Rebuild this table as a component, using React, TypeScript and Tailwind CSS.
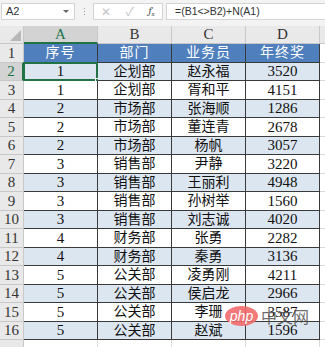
import React from 'react'

const rows: [string, string, string, string][] = [
  ['1', '企划部', '赵永福', '3520'],
  ['1', '企划部', '胥和平', '4151'],
  ['2', '市场部', '张海顺', '1286'],
  ['2', '市场部', '董连青', '2678'],
  ['2', '市场部', '杨帆', '3057'],
  ['3', '销售部', '尹静', '3220'],
  ['3', '销售部', '王丽利', '4948'],
  ['3', '销售部', '孙树举', '1560'],
  ['3', '销售部', '刘志诚', '4020'],
  ['4', '财务部', '张勇', '2282'],
  ['4', '财务部', '秦勇', '3136'],
  ['5', '公关部', '凌勇刚', '4211'],
  ['5', '公关部', '侯启龙', '2966'],
  ['5', '公关部', '李珊', '3587'],
  ['5', '公关部', '赵斌', '1596'],
]

const font = { fontFamily: "'Liberation Serif', 'Noto Sans CJK SC', serif" }

function FormulaBar() {
  return (
    <div className="flex h-[26px] items-start bg-[#f3f3f3] pt-[3px]" style={{ fontFamily: "'Liberation Sans', 'Noto Sans CJK SC', sans-serif" }}>
      <div className="ml-px flex h-[17px] w-[74px] items-center justify-between border border-[#d4d4d4] bg-white pl-[4px] pr-[5px] text-[11px] text-[#333]">
        <span>A2</span>
        <span className="h-0 w-0 border-x-[3px] border-t-[3px] border-x-transparent border-t-[#666]" />
      </div>
      <div className="flex w-[18px] flex-col items-center gap-[2px] pt-[5px]">
        <span className="h-px w-px bg-[#999]" />
        <span className="h-px w-px bg-[#999]" />
        <span className="h-px w-px bg-[#999]" />
      </div>
      <div className="flex h-[17px] w-[70px] items-center justify-around border border-[#d4d4d4] bg-white text-[12px]">
        <span className="text-[#c4c4c4]">✕</span>
        <span className="text-[#c4c4c4]">✓</span>
        <span className="font-serif text-[11px] italic text-[#555]">
          f<sub className="text-[7px]">x</sub>
        </span>
      </div>
      <div className="ml-[3px] flex h-[17px] flex-1 items-center border border-r-0 border-[#d4d4d4] bg-white pl-[8px] text-[10.5px] text-[#333]">
        =(B1&lt;&gt;B2)+N(A1)
      </div>
    </div>
  )
}

const cols = 'grid grid-cols-[24px_74px_74px_74px_74px_1fr]'

function ColumnHeader() {
  return (
    <div className={`${cols} h-[18px] bg-[#e9e9e9]`} style={font}>
      <div className="relative border-r border-b border-[#c8c8c8]">
        <svg className="absolute right-[2px] bottom-[2px]" width="11" height="11" viewBox="0 0 11 11">
          <polygon points="11,0 11,11 0,11" fill="#b7b7b7" />
        </svg>
      </div>
      <div className="flex items-center justify-center border-r border-b-2 border-r-[#c8c8c8] border-b-[#217346] bg-[#d3d3d3] text-[15px] leading-none text-[#217346]">A</div>
      {['B', 'C', 'D'].map((c) => (
        <div key={c} className="flex items-center justify-center border-r border-b border-[#c8c8c8] text-[15px] leading-none text-[#333]">{c}</div>
      ))}
      <div className="border-b border-[#c8c8c8]" />
    </div>
  )
}

export default function App() {
  const heights = [19, 18, 19, 18, 19, 18, 19, 18, 19, 18, 19, 18, 19, 18, 19, 18]
  return (
    <div className="relative h-[347px] w-[325px] overflow-hidden bg-white">
      <FormulaBar />
      <ColumnHeader />
      <div style={font}>
        {/* header row */}
        <div className={cols} style={{ height: heights[0] }}>
          <div className="flex items-center justify-center border-r border-b border-[#c8c8c8] bg-[#e9e9e9] text-[15px] leading-none text-[#333]">1</div>
          {['序号', '部门', '业务员', '年终奖'].map((h) => (
            <div key={h} className="flex items-center justify-center border-r border-b border-[#3a3a3a] bg-[#4f7fbd] text-[14px] leading-none tracking-[1px] text-white">
              {h}
            </div>
          ))}
          <div className="border-b border-[#d9d9d9]" />
        </div>
        {rows.map((r, i) => {
          const n = i + 2
          const sel = n === 2
          const bg = n % 2 === 0 ? 'bg-[#dce6f1]' : 'bg-white'
          return (
            <div key={n} className={cols} style={{ height: heights[i + 1] }}>
              <div
                className={
                  sel
                    ? 'flex items-center justify-center border-r-2 border-b border-r-[#217346] border-b-[#c8c8c8] bg-[#d3d3d3] text-[15px] leading-none text-[#217346]'
                    : 'flex items-center justify-center border-r border-b border-[#c8c8c8] bg-[#e9e9e9] text-[15px] leading-none text-[#333]'
                }
              >
                {n}
              </div>
              {r.map((v, j) => (
                <div
                  key={j}
                  className={`relative flex items-center justify-center border-r border-b border-[#3a3a3a] ${bg} ${j === 0 || j === 3 ? 'text-[15px]' : 'text-[14px]'} leading-none text-[#111]`}
                >
                  {v}
                  {sel && j === 0 && (
                    <span className="absolute -top-px -left-px h-[calc(100%+2px)] w-[calc(100%+2px)] border-2 border-[#217346]">
                      <span className="absolute -right-[4px] -bottom-[4px] h-[5px] w-[5px] border border-white bg-[#217346]" />
                    </span>
                  )}
                </div>
              ))}
              <div className="border-b border-[#d9d9d9]" />
            </div>
          )
        })}
        <div className={`${cols} h-[10px]`}>
          <div className="border-r border-[#c8c8c8] bg-[#e9e9e9]" />
          <div className="border-r border-[#d9d9d9]" />
          <div className="border-r border-[#d9d9d9]" />
          <div className="border-r border-[#d9d9d9]" />
          <div className="border-r border-[#d9d9d9]" />
          <div />
        </div>
      </div>

      {/* watermark */}
      <div className="absolute top-[306px] left-[225px] flex items-center gap-[3px]">
        <div className="flex h-[20px] w-[33px] items-center justify-center rounded-[50%] bg-[#f06a6a]/90 text-[14px] italic leading-none text-white" style={{ fontFamily: "'Liberation Sans', sans-serif" }}>
          php
        </div>
        <span className="text-[16px] leading-none text-[#444]/80" style={{ fontFamily: "'Noto Sans CJK SC', sans-serif" }}>
          中文网
        </span>
      </div>
    </div>
  )
}
